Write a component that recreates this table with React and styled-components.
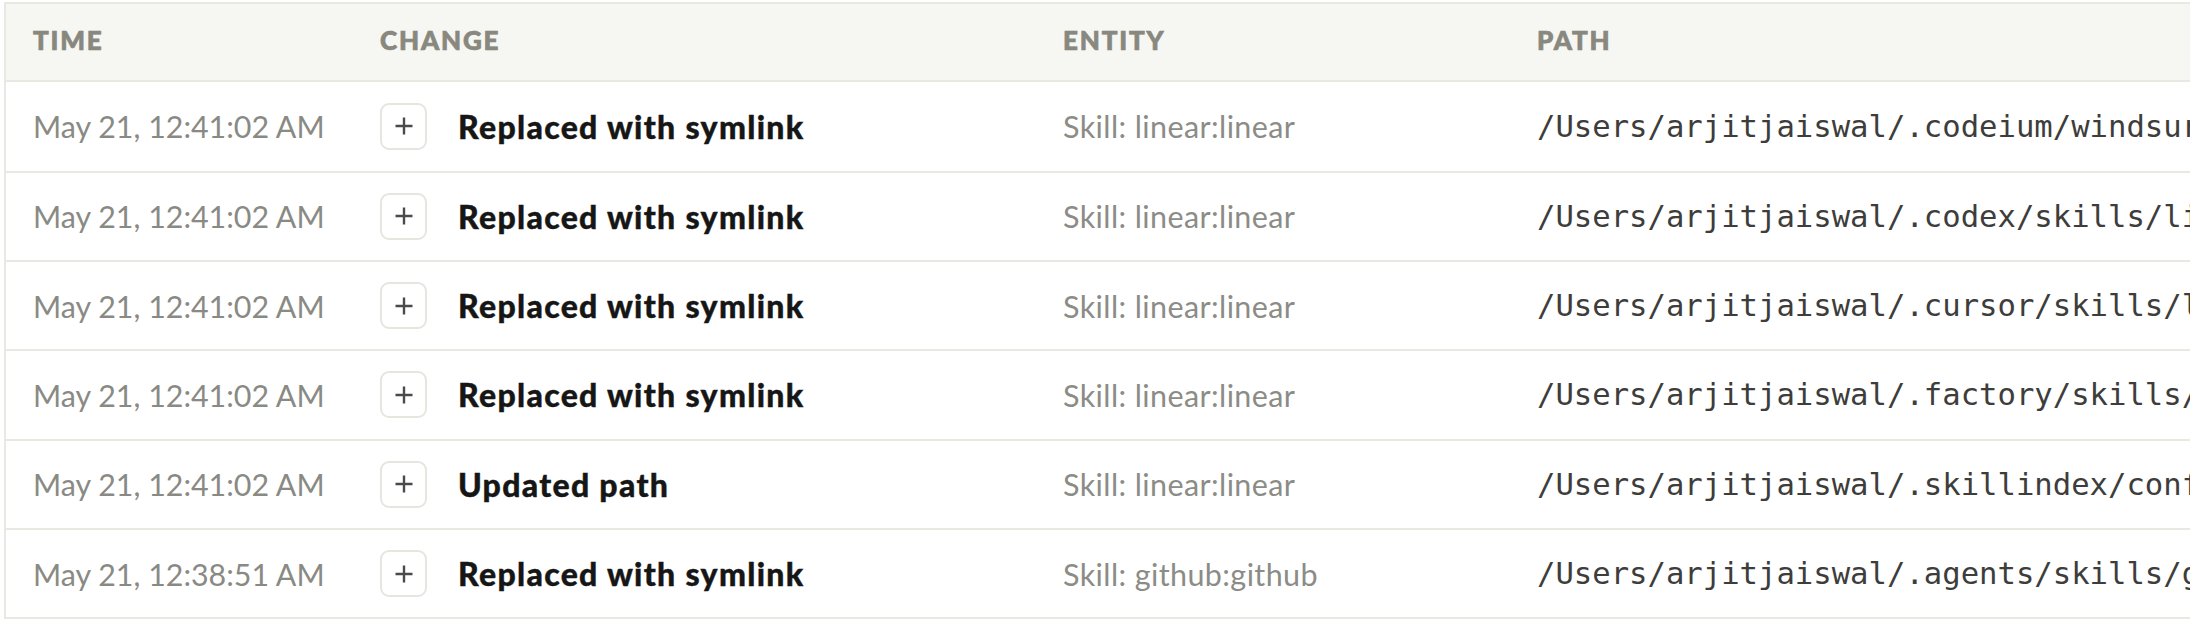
import React from 'react';
import styled, { createGlobalStyle } from 'styled-components';

const GlobalStyle = createGlobalStyle`
    html, body {
        margin: 0;
        padding: 0;
        background: #ffffff;
        overflow: hidden;
    }
`;

const rows = [
    { time: 'May 21, 12:41:02 AM', change: 'Replaced with symlink', entity: 'Skill: linear:linear', path: '/Users/arjitjaiswal/.codeium/windsurf/skills/linear' },
    { time: 'May 21, 12:41:02 AM', change: 'Replaced with symlink', entity: 'Skill: linear:linear', path: '/Users/arjitjaiswal/.codex/skills/linear' },
    { time: 'May 21, 12:41:02 AM', change: 'Replaced with symlink', entity: 'Skill: linear:linear', path: '/Users/arjitjaiswal/.cursor/skills/linear' },
    { time: 'May 21, 12:41:02 AM', change: 'Replaced with symlink', entity: 'Skill: linear:linear', path: '/Users/arjitjaiswal/.factory/skills/linear' },
    { time: 'May 21, 12:41:02 AM', change: 'Updated path', entity: 'Skill: linear:linear', path: '/Users/arjitjaiswal/.skillindex/config.json' },
    { time: 'May 21, 12:38:51 AM', change: 'Replaced with symlink', entity: 'Skill: github:github', path: '/Users/arjitjaiswal/.agents/skills/github' },
];

const Page = styled.div`
    padding: 2px 0 0 4px;
    width: 2186px;
    overflow: hidden;
`;

const Table = styled.div`
    width: 2500px;
    border-top: 2px solid #e9e9e4;
    border-left: 2px solid #e9e9e4;
    font-family: Lato, "Open Sans", sans-serif;
`;

const Row = styled.div`
    display: grid;
    grid-template-columns: 347px 683px 474px 1fr;
    align-items: center;
    box-sizing: border-box;
    height: ${p => p.$head ? '78px' : '89.4px'};
    padding-bottom: ${p => p.$head ? '5px' : '0'};
    border-bottom: 2px solid #e9e9e4;
    background: ${p => p.$head ? '#f6f6f2' : '#ffffff'};

    &:nth-child(2) {
        height: 90.5px;
    }
`;

const Cell = styled.div`
    padding-left: 27px;
    white-space: nowrap;
    overflow: hidden;
    display: flex;
    align-items: center;
`;

const HeadLabel = styled.span`
    font-size: 26px;
    font-weight: 900;
    letter-spacing: 0.07em;
    color: #88887f;
    text-transform: uppercase;
    -webkit-text-stroke: 0.7px #88887f;
`;

const Time = styled.span`
    font-size: 30.4px;
    font-weight: 400;
    color: #8a8a85;
`;

const Entity = styled.span`
    font-size: 30.5px;
    letter-spacing: 0.4px;
    font-weight: 400;
    color: #8c8c87;
`;

const ChangeText = styled.span`
    font-size: 32px;
    font-weight: 900;
    letter-spacing: 1.3px;
    color: #161616;
    margin-left: 31px;
    -webkit-text-stroke: 0.4px #161616;
`;

const ExpandButton = styled.span`
    box-sizing: border-box;
    width: 47px;
    height: 47px;
    border: 2px solid #e6e6e0;
    border-radius: 9px;
    display: flex;
    align-items: center;
    justify-content: center;
    color: #4a4a4a;
    background: #ffffff;
`;

const PathText = styled.span`
    font-family: "DejaVu Sans Mono", "Liberation Mono", monospace;
    font-size: 30.6px;
    color: #3d3d3b;
`;

const PlusIcon = () => (
    <svg width="20" height="20" viewBox="0 0 20 20">
        <path d="M10 1.5v17M1.5 10h17" stroke="currentColor" strokeWidth="2.4" strokeLinecap="butt" />
    </svg>
);

export default function App() {
    return (
        <Page>
            <GlobalStyle />
            <Table>
                <Row $head>
                    <Cell><HeadLabel>Time</HeadLabel></Cell>
                    <Cell><HeadLabel>Change</HeadLabel></Cell>
                    <Cell><HeadLabel>Entity</HeadLabel></Cell>
                    <Cell><HeadLabel>Path</HeadLabel></Cell>
                </Row>
                {rows.map((r, i) => (
                    <Row key={i}>
                        <Cell><Time>{r.time}</Time></Cell>
                        <Cell>
                            <ExpandButton><PlusIcon /></ExpandButton>
                            <ChangeText>{r.change}</ChangeText>
                        </Cell>
                        <Cell><Entity>{r.entity}</Entity></Cell>
                        <Cell><PathText>{r.path}</PathText></Cell>
                    </Row>
                ))}
            </Table>
        </Page>
    );
}
